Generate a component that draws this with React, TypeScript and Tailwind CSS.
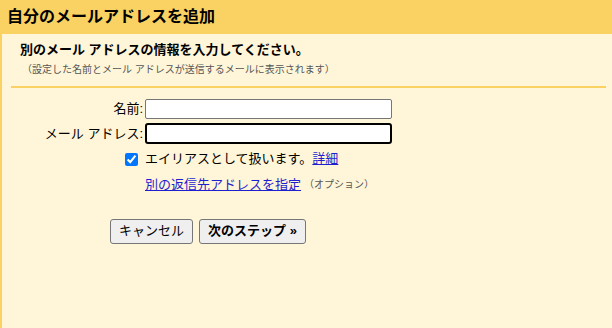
import { FC } from "react";

const font = { fontFamily: '"Liberation Sans", "Noto Sans CJK JP", sans-serif' };

const App: FC = () => {
	return (
		<div className="w-[612px] h-[328px] bg-[#fff5d8] text-black flex flex-col overflow-hidden" style={font}>
			<div className="h-[34px] bg-[#fad163] flex items-center pl-[7px] shrink-0">
				<h1 className="text-[16px] font-bold leading-none">自分のメールアドレスを追加</h1>
			</div>
			<div className="flex-1 border-l-2 border-[#fad163] pl-[9px] pr-[4px]">
				<div className="pl-[9px] pt-[8px]">
					<p className="text-[13px] font-bold leading-[16px]">別のメール アドレスの情報を入力してください。</p>
					<p className="text-[10px] text-[#555] leading-[14px] mt-[5px] pl-[2px]">
						（設定した名前とメール アドレスが送信するメールに表示されます）
					</p>
				</div>
				<div className="h-[2px] bg-[#fad163] mt-[9px] mr-[2px]" />
				<div className="mt-[10px] text-[13px]">
					<div className="flex items-center h-[21px]">
						<label className="w-[134px] text-right pr-[2px]">名前:</label>
						<input className="w-[247px] h-[20px] bg-white border border-[#767676] rounded-[2px] outline-none" />
					</div>
					<div className="flex items-center h-[21px] mt-[4px]">
						<label className="w-[134px] text-right pr-[2px]">メール アドレス:</label>
						<input className="w-[247px] h-[21px] bg-white border-2 border-black rounded-[3px] outline-none" />
					</div>
					<div className="flex items-center mt-[6px] h-[18px]">
						<div className="w-[134px] flex justify-end pr-[7px]">
							<input type="checkbox" defaultChecked className="m-0 w-[13px] h-[13px] accent-[#0075ff]" />
						</div>
						<span>
							エイリアスとして扱います。<a href="#" className="text-[#1f1fcf] underline">詳細</a>
						</span>
					</div>
					<div className="flex items-center mt-[7px] pl-[134px]">
						<a href="#" className="text-[#1f1fcf] underline">別の返信先アドレスを指定</a>
						<span className="text-[10px] text-[#555] ml-[3px]">（オプション）</span>
					</div>
					<div className="flex gap-[6px] mt-[24px] pl-[99px]">
						<button className="h-[25px] px-[8px] bg-[#efefef] border border-[#767676] rounded-[3px] text-[13px]">キャンセル</button>
						<button className="h-[25px] px-[8px] bg-[#efefef] border border-[#767676] rounded-[3px] text-[13px] font-bold">次のステップ »</button>
					</div>
				</div>
			</div>
		</div>
	);
};

export default App;
